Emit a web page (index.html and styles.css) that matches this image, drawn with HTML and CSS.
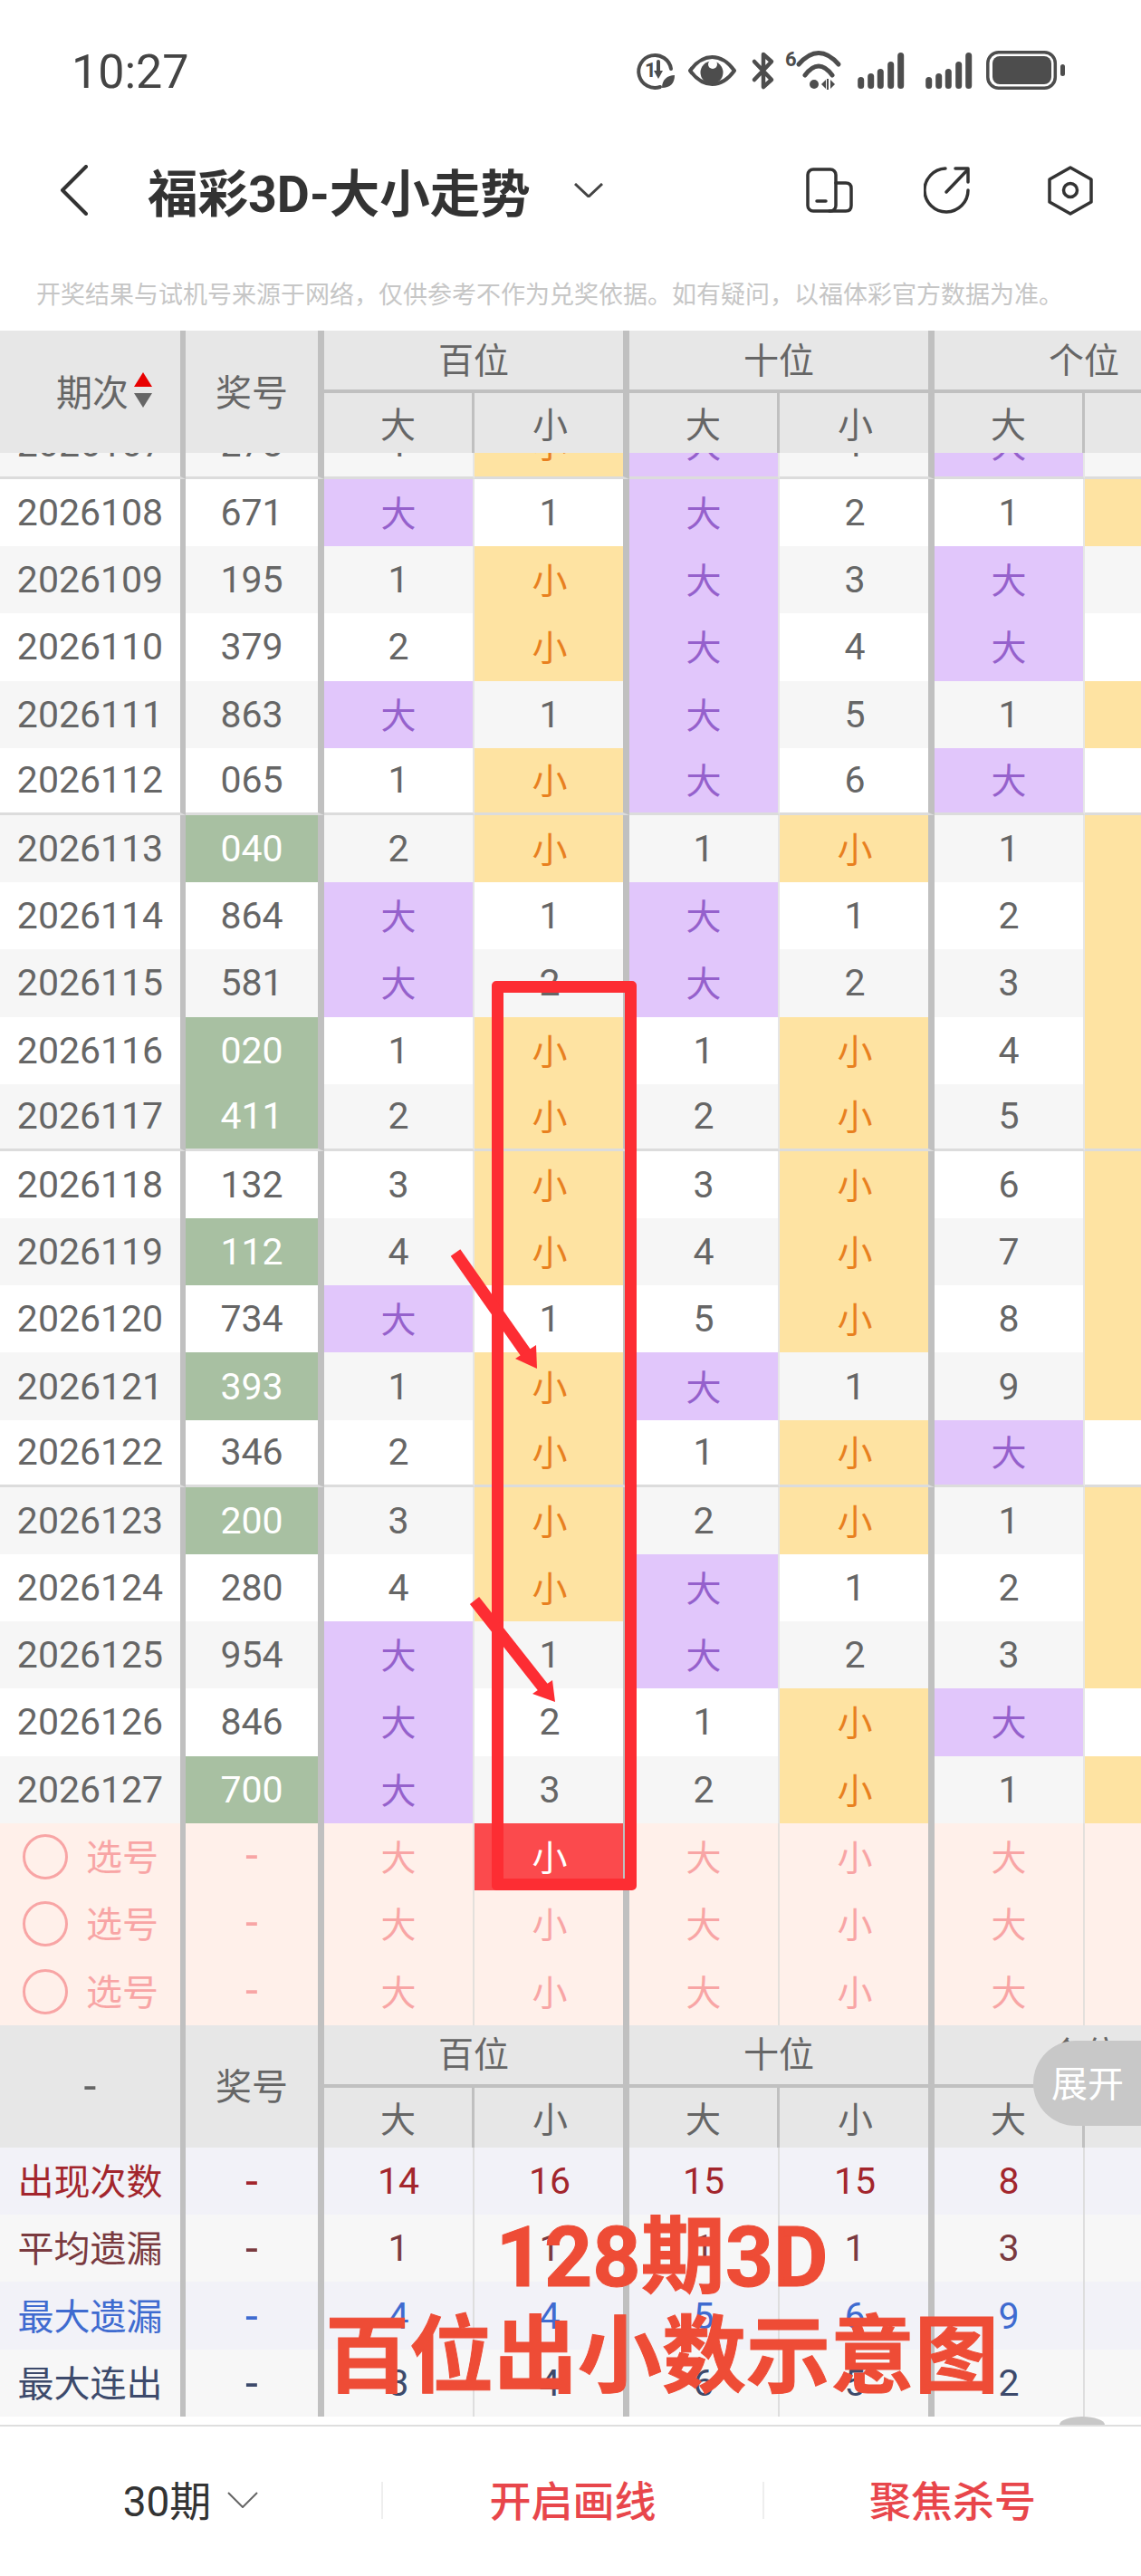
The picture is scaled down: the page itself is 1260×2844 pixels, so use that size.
FILE: index.html
```html
<!DOCTYPE html>
<html lang="zh-CN">

<head>
    <meta charset="UTF-8">
    <meta name="viewport" content="width=device-width, initial-scale=1.0">
    <title>福彩3D-大小走势</title>
    <link rel="stylesheet" href="styles.css">
</head>

<body>
    <div class="page">
        <div class="statusbar">
            <span class="clock">10:27</span>
            <svg class="status-icons" width="480" height="56" viewBox="700 51 480 56">
                <g fill="none" stroke="#4d4d4d" stroke-width="4" stroke-linecap="round" stroke-linejoin="round">
                    <path d="M729 96A18 18 0 1 1 741 76"/>
                    <path d="M727 68V82"/>
                    <path d="M762 78C770 67 778 63 786.500 63C795 63 803 67 811 78C803 89 795 93 786.500 93C778 93 770 89 762 78Z"/>
                    <path stroke-width="4.500" d="M833 68L852 88L843 96V60L852 68L833 88"/>
                    <path stroke-width="5" d="M882 71Q904 46 926 71"/>
                    <path stroke-width="5" d="M889 83Q904 63 919 83"/>
                </g>
                <g fill="#4d4d4d">
                    <text class="status-num" x="712" y="85">1</text>
                    <path d="M722 78H732L727 87Z"/>
                    <path d="M731 97C731 88 737 83 745 83C745 92 740 97 731 97Z"/>
                    <circle cx="786" cy="80" r="12.500"/>
                    <circle cx="787" cy="71" r="5" fill="#fff"/>
                    <text class="status-six" x="867" y="73">6</text>
                    <circle cx="899" cy="93" r="5"/>
                    <path d="M907 93L912 88V98Z"/>
                    <rect x="913" y="87" width="2" height="12"/>
                    <path d="M917 88V98L922 93Z"/>
                </g>
                <g stroke="#4d4d4d" stroke-width="7" stroke-linecap="round">
                    <path d="M950.700 88.500V94.500M961.700 84.500V94.500M972.300 79.500V94.500M983.700 71.500V94.500M994.700 61.500V94.500"/>
                    <path d="M1025.700 88.500V94.500M1036.700 84.500V94.500M1047.300 79.500V94.500M1058.700 71.500V94.500M1069.700 61.500V94.500"/>
                </g>
                <rect x="1090.800" y="57.800" width="74.500" height="39.500" rx="12" fill="none" stroke="#4d4d4d" stroke-width="3.500"/>
                <rect x="1096" y="62" width="65" height="31" rx="8" fill="#4d4d4d"/>
                <rect x="1171" y="71" width="5" height="13" rx="2.500" fill="#4d4d4d"/>
            </svg>
        </div>

        <div class="navbar">
            <svg class="back" width="32" height="56" viewBox="0 0 32 56">
                <path d="M29 2L3 28L29 54" fill="none" stroke="#333" stroke-width="4" stroke-linecap="round" stroke-linejoin="round"/>
            </svg>
            <h1 class="title">福彩3D-大小走势</h1>
            <svg class="title-arrow" width="32" height="16" viewBox="0 0 32 16">
                <path d="M1 1L16 15L31 1" fill="none" stroke="#444" stroke-width="3"/>
            </svg>
            <div class="nav-icons">
                <svg class="nav-device" width="52" height="50" viewBox="890 187 52 50" fill="none" stroke="#333" stroke-width="3.500" stroke-linejoin="round" stroke-linecap="round">
                    <rect x="892" y="189" width="31" height="46" rx="6"/>
                    <path d="M923 204H934Q940 204 940 210V229Q940 235 934 235H916"/>
                    <path d="M902 224H912"/>
                </svg>
                <svg class="nav-share" width="52" height="52" viewBox="1020 186 52 52" fill="none" stroke="#333" stroke-width="3.500" stroke-linejoin="round" stroke-linecap="round">
                    <path d="M1044 188A24 24 0 1 0 1069 212"/>
                    <path d="M1045 214L1068 190"/>
                    <path d="M1055 188H1069V203"/>
                </svg>
                <svg class="nav-setting" width="52" height="56" viewBox="1156 184 52 56" fill="none" stroke="#333" stroke-width="3.500" stroke-linejoin="round">
                    <path d="M1182 187L1205 200V225L1182 238L1159 225V200Z"/>
                    <circle cx="1182" cy="212" r="7.500"/>
                </svg>
            </div>
        </div>

        <p class="notice">开奖结果与试机号来源于网络，仅供参考不作为兑奖依据。如有疑问，以福体彩官方数据为准。</p>

        <div class="chart">
            <div class="thead">
                <div class="th th-first"><span>期次</span>
                    <span class="sort"><i class="up"></i><i class="down"></i></span>
                </div>
                <div class="th th-num">奖号</div>
                <div class="th-group">
                    <div class="th-title">百位</div>
                    <div class="th-subs"><span>大</span><span>小</span></div>
                </div>
                <div class="th-group">
                    <div class="th-title">十位</div>
                    <div class="th-subs"><span>大</span><span>小</span></div>
                </div>
                <div class="th-group">
                    <div class="th-title">个位</div>
                    <div class="th-subs"><span>大</span><span>小</span></div>
                </div>
            </div>

            <div class="rows">
                <div class="row end first"><div class="c">2026107</div><div class="c">278</div><div class="c">1</div><div class="c s">小</div><div class="c b">大</div><div class="c">1</div><div class="c b">大</div><div class="c">1</div></div>
                <div class="row"><div class="c">2026108</div><div class="c">671</div><div class="c b">大</div><div class="c">1</div><div class="c b">大</div><div class="c">2</div><div class="c">1</div><div class="c s">小</div></div>
                <div class="row"><div class="c">2026109</div><div class="c">195</div><div class="c">1</div><div class="c s">小</div><div class="c b">大</div><div class="c">3</div><div class="c b">大</div><div class="c">1</div></div>
                <div class="row"><div class="c">2026110</div><div class="c">379</div><div class="c">2</div><div class="c s">小</div><div class="c b">大</div><div class="c">4</div><div class="c b">大</div><div class="c">2</div></div>
                <div class="row"><div class="c">2026111</div><div class="c">863</div><div class="c b">大</div><div class="c">1</div><div class="c b">大</div><div class="c">5</div><div class="c">1</div><div class="c s">小</div></div>
                <div class="row end"><div class="c">2026112</div><div class="c">065</div><div class="c">1</div><div class="c s">小</div><div class="c b">大</div><div class="c">6</div><div class="c b">大</div><div class="c">1</div></div>
                <div class="row"><div class="c">2026113</div><div class="c g">040</div><div class="c">2</div><div class="c s">小</div><div class="c">1</div><div class="c s">小</div><div class="c">1</div><div class="c s">小</div></div>
                <div class="row"><div class="c">2026114</div><div class="c">864</div><div class="c b">大</div><div class="c">1</div><div class="c b">大</div><div class="c">1</div><div class="c">2</div><div class="c s">小</div></div>
                <div class="row"><div class="c">2026115</div><div class="c">581</div><div class="c b">大</div><div class="c">2</div><div class="c b">大</div><div class="c">2</div><div class="c">3</div><div class="c s">小</div></div>
                <div class="row"><div class="c">2026116</div><div class="c g">020</div><div class="c">1</div><div class="c s">小</div><div class="c">1</div><div class="c s">小</div><div class="c">4</div><div class="c s">小</div></div>
                <div class="row end"><div class="c">2026117</div><div class="c g">411</div><div class="c">2</div><div class="c s">小</div><div class="c">2</div><div class="c s">小</div><div class="c">5</div><div class="c s">小</div></div>
                <div class="row"><div class="c">2026118</div><div class="c">132</div><div class="c">3</div><div class="c s">小</div><div class="c">3</div><div class="c s">小</div><div class="c">6</div><div class="c s">小</div></div>
                <div class="row"><div class="c">2026119</div><div class="c g">112</div><div class="c">4</div><div class="c s">小</div><div class="c">4</div><div class="c s">小</div><div class="c">7</div><div class="c s">小</div></div>
                <div class="row"><div class="c">2026120</div><div class="c">734</div><div class="c b">大</div><div class="c">1</div><div class="c">5</div><div class="c s">小</div><div class="c">8</div><div class="c s">小</div></div>
                <div class="row"><div class="c">2026121</div><div class="c g">393</div><div class="c">1</div><div class="c s">小</div><div class="c b">大</div><div class="c">1</div><div class="c">9</div><div class="c s">小</div></div>
                <div class="row end"><div class="c">2026122</div><div class="c">346</div><div class="c">2</div><div class="c s">小</div><div class="c">1</div><div class="c s">小</div><div class="c b">大</div><div class="c">1</div></div>
                <div class="row"><div class="c">2026123</div><div class="c g">200</div><div class="c">3</div><div class="c s">小</div><div class="c">2</div><div class="c s">小</div><div class="c">1</div><div class="c s">小</div></div>
                <div class="row"><div class="c">2026124</div><div class="c">280</div><div class="c">4</div><div class="c s">小</div><div class="c b">大</div><div class="c">1</div><div class="c">2</div><div class="c s">小</div></div>
                <div class="row"><div class="c">2026125</div><div class="c">954</div><div class="c b">大</div><div class="c">1</div><div class="c b">大</div><div class="c">2</div><div class="c">3</div><div class="c s">小</div></div>
                <div class="row"><div class="c">2026126</div><div class="c">846</div><div class="c b">大</div><div class="c">2</div><div class="c">1</div><div class="c s">小</div><div class="c b">大</div><div class="c">1</div></div>
                <div class="row"><div class="c">2026127</div><div class="c g">700</div><div class="c b">大</div><div class="c">3</div><div class="c">2</div><div class="c s">小</div><div class="c">1</div><div class="c s">小</div></div>
            </div>

            <div class="picks">
                <div class="row"><div class="c pick"><i class="radio"></i>选号</div><div class="c dash">-</div><div class="c">大</div><div class="c on">小</div><div class="c">大</div><div class="c">小</div><div class="c">大</div><div class="c">小</div></div>
                <div class="row"><div class="c pick"><i class="radio"></i>选号</div><div class="c dash">-</div><div class="c">大</div><div class="c">小</div><div class="c">大</div><div class="c">小</div><div class="c">大</div><div class="c">小</div></div>
                <div class="row"><div class="c pick"><i class="radio"></i>选号</div><div class="c dash">-</div><div class="c">大</div><div class="c">小</div><div class="c">大</div><div class="c">小</div><div class="c">大</div><div class="c">小</div></div>
            </div>

            <div class="thead">
                <div class="th th-dash">-</div>
                <div class="th th-num">奖号</div>
                <div class="th-group">
                    <div class="th-title">百位</div>
                    <div class="th-subs"><span>大</span><span>小</span></div>
                </div>
                <div class="th-group">
                    <div class="th-title">十位</div>
                    <div class="th-subs"><span>大</span><span>小</span></div>
                </div>
                <div class="th-group">
                    <div class="th-title">个位</div>
                    <div class="th-subs"><span>大</span><span>小</span></div>
                </div>
            </div>

            <div class="stats">
                <div class="row st-red"><div class="c">出现次数</div><div class="c dash">-</div><div class="c">14</div><div class="c">16</div><div class="c">15</div><div class="c">15</div><div class="c">8</div><div class="c">22</div></div>
                <div class="row st-brown"><div class="c">平均遗漏</div><div class="c dash">-</div><div class="c">1</div><div class="c">1</div><div class="c">1</div><div class="c">1</div><div class="c">3</div><div class="c">0</div></div>
                <div class="row st-blue"><div class="c">最大遗漏</div><div class="c dash">-</div><div class="c">4</div><div class="c">4</div><div class="c">5</div><div class="c">6</div><div class="c">9</div><div class="c">2</div></div>
                <div class="row st-slate"><div class="c">最大连出</div><div class="c dash">-</div><div class="c">3</div><div class="c">4</div><div class="c">6</div><div class="c">5</div><div class="c">2</div><div class="c">9</div></div>
            </div>
        </div>

        <div class="gap"><div class="dome"></div></div>

        <div class="bottombar">
            <div class="tab tab-period">30期
                <svg width="34" height="18" viewBox="0 0 34 18">
                    <path d="M1 1L17 17L33 1" fill="none" stroke="#666" stroke-width="2"/>
                </svg>
            </div>
            <div class="tab tab-red">开启画线</div>
            <div class="tab tab-red">聚焦杀号</div>
        </div>

        <!-- annotations drawn over the screenshot -->
        <div class="expand">展开</div>
        <div class="red-box"></div>
        <svg class="arrows" width="1260" height="2844" viewBox="0 0 1260 2844">
            <g fill="none" stroke="#fd2d33" stroke-width="13">
                <path d="M503 1383L583 1497"/>
                <path d="M524 1767L602 1866"/>
            </g>
            <g fill="#fd2d33">
                <path d="M593 1511L592 1485L569 1500Z"/>
                <path d="M613 1879L610 1855L588 1870Z"/>
            </g>
        </svg>
        <div class="big-text">128期3D<br>百位出小数示意图</div>
    </div>
</body>

</html>
```

FILE: styles.css
```css
* {
    box-sizing: border-box;
}

html,
body {
    margin: 0;
    padding: 0;
    background: #fff;
}

body {
    font-family: Roboto, "Noto Sans CJK SC", sans-serif;
    color: #666;
}

.page {
    position: relative;
    width: 1260px;
    height: 2844px;
    overflow: hidden;
}

/* top */
.statusbar {
    height: 158px;
    padding: 0 80px 0 79px;
    display: flex;
    align-items: center;
    justify-content: space-between;
}

.clock {
    font-size: 52px;
    color: #444;
}

.status-num {
    font-size: 22px;
    font-weight: 700;
}

.status-six {
    font-size: 22px;
    font-weight: 700;
}

.navbar {
    height: 104px;
    padding-left: 66px;
    padding-right: 52px;
    display: flex;
    align-items: center;
}

.back {
    flex: none;
}

.title {
    margin: 0 0 0 65px;
    font-size: 55.500px;
    font-weight: 700;
    color: #333;
    white-space: nowrap;
}

.title-arrow {
    margin-left: 48px;
}

.nav-icons {
    margin-left: auto;
    display: flex;
    align-items: center;
}

.nav-share {
    margin-left: 78px;
}

.nav-setting {
    margin-left: 84px;
}

.notice {
    margin: 0;
    height: 103px;
    padding: 20px 0 0 40px;
    display: flex;
    align-items: center;
    font-size: 27px;
    color: #c6c6c6;
    white-space: nowrap;
}

/* chart */
.chart {
    width: 1369px;
}

.thead {
    height: 135px;
    display: grid;
    grid-template-columns: 205px 153px 337px 337px 337px;
    background-color: #e7e7e7;
    font-size: 39px;
}

.th {
    display: flex;
    align-items: center;
    justify-content: center;
    padding-bottom: 4px;
    font-size: 40px;
    border-right: 6px solid #c0c0c0;
}

.th-num {
    border-right-width: 7px;
}

.th-dash {
    font-size: 50px;
    padding-bottom: 0;
}

.th-first {
    justify-content: flex-start;
    padding-left: 62px;
    gap: 6px;
}

.sort {
    display: flex;
    flex-direction: column;
    gap: 7px;
}

.sort i {
    display: block;
    width: 0;
    height: 0;
    border-left: 10px solid transparent;
    border-right: 10px solid transparent;
}

.sort .up {
    border-bottom: 16px solid #e80000;
}

.sort .down {
    border-top: 16px solid #666;
}

.th-group {
    border-right: 7px solid #c0c0c0;
    display: flex;
    flex-direction: column;
}

.th-title {
    height: 69px;
    padding-bottom: 6px;
    border-bottom: 4px solid #c0c0c0;
    display: flex;
    align-items: center;
    justify-content: center;
}

.th-subs {
    flex: 1;
    display: grid;
    grid-template-columns: 166px 164px;
}

.th-subs span {
    display: flex;
    align-items: center;
    justify-content: center;
    padding-bottom: 2px;
}

.th-subs span:first-child {
    border-right: 3px solid #c0c0c0;
}

.th-subs span:last-child {
    padding-left: 3px;
}

.rows {
    height: 1513px;
    overflow: hidden;
}

.row {
    height: 74.200px;
    display: grid;
    grid-template-columns: 205px 153px 166px 171px 166px 171px 166px 171px;
}

.row.first {
    margin-top: -45.200px;
}

.rows .row:nth-child(odd) {
    background-color: #f6f6f6;
}

.rows .row:nth-child(even) {
    background-color: #fff;
}

.c {
    display: flex;
    align-items: center;
    justify-content: center;
    font-size: 41px;
    border-right: 2px solid #e6e6e6;
    white-space: nowrap;
}

.c:nth-child(1) {
    border-right: 6px solid #c0c0c0;
}

.c:nth-child(2),
.c:nth-child(4),
.c:nth-child(6) {
    border-right: 7px solid #c0c0c0;
}

.c:nth-child(4),
.c:nth-child(6),
.c:nth-child(8) {
    padding-left: 2px;
}

.end .c {
    border-bottom: 3px solid #dcdcdc;
}

.b {
    padding-bottom: 4px;
    background-color: #e1c6fb;
    color: #9561cc;
    font-size: 39px;
}

.s {
    padding-bottom: 4px;
    background-color: #fee3a2;
    color: #e8801f;
    font-size: 39px;
}

.g {
    background-color: #a8c0a2;
    color: #fff;
}

.picks {
    background-color: #fff0ea;
    color: #f8a5a5;
}

.picks .row {
    height: 74.300px;
}

.picks .c {
    padding-bottom: 4px;
    font-size: 39px;
}

.picks .c:nth-child(3),
.picks .c:nth-child(5),
.picks .c:nth-child(7) {
    border-right-color: #e4e0dc;
}

.picks .c.dash,
.stats .c.dash {
    font-size: 50px;
}

.picks .pick {
    justify-content: flex-start;
    padding-left: 25px;
    gap: 20px;
    font-size: 40px;
}

.radio {
    flex: none;
    width: 50px;
    height: 50px;
    margin-top: 4px;
    border: 3px solid #f8a5a5;
    border-radius: 50%;
}

.picks .on {
    background-color: #fb4a4d;
    color: #fff;
}

.stats .row {
    height: 74.250px;
}

.stats .c:first-child {
    padding-bottom: 4px;
    font-size: 40px;
}

.stats .c:nth-child(3),
.stats .c:nth-child(5),
.stats .c:nth-child(7) {
    border-right-color: #dedede;
}

.stats .row:nth-child(odd) {
    background-color: #f2f2f8;
}

.stats .row:nth-child(even) {
    background-color: #f7f7f7;
}

.st-red {
    color: #a3262d;
}

.st-brown {
    color: #7a3a3f;
}

.st-blue {
    color: #3f6bd0;
}

.st-slate {
    color: #3d4a6b;
}

/* bottom */
.gap {
    height: 9px;
}

.dome {
    width: 50px;
    height: 9px;
    margin-left: 1170px;
    border-radius: 25px 25px 0 0 / 9px 9px 0 0;
    background-color: #c8c8c8;
}

.bottombar {
    height: 167px;
    padding-bottom: 2px;
    border-top: 2px solid #dedede;
    display: grid;
    grid-template-columns: 421px 421px 418px;
    align-items: center;
}

.tab {
    height: 41px;
    padding-bottom: 5px;
    display: flex;
    align-items: center;
    justify-content: center;
    gap: 18px;
    font-size: 46px;
}

.tab svg {
    margin-top: 5px;
}

.tab + .tab {
    border-left: 2px solid #eee;
}

.tab-period {
    color: #333;
}

.tab-red {
    color: #e8464b;
    font-weight: 500;
}

/* overlays */
.expand {
    position: absolute;
    left: 1141px;
    top: 2253px;
    width: 119px;
    height: 94px;
    padding: 0 0 4px 20px;
    display: flex;
    align-items: center;
    border-radius: 47px 0 0 47px;
    background-color: #c8c8c8;
    color: #fff;
    font-size: 40px;
    white-space: nowrap;
}

.red-box {
    position: absolute;
    left: 543px;
    top: 1083px;
    width: 160px;
    height: 1004px;
    border: 13px solid #fd2d33;
    border-radius: 5px;
}

.arrows {
    position: absolute;
    left: 0;
    top: 0;
}

.big-text {
    position: absolute;
    left: 331px;
    top: 2438px;
    width: 800px;
    text-align: center;
    font-size: 93px;
    line-height: 110px;
    font-weight: 700;
    color: #ee4c36;
    -webkit-text-stroke: 1px #ee4c36;
}
```
